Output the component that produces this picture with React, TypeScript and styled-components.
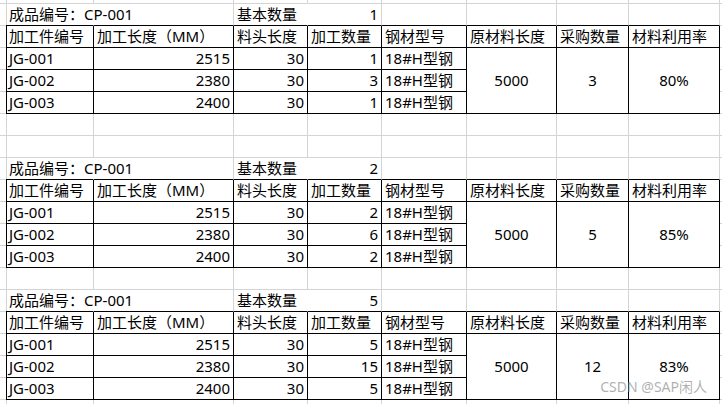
import React from 'react';
import styled, { createGlobalStyle, css } from 'styled-components';

const GlobalStyle = createGlobalStyle`
  html, body { margin: 0; padding: 0; background: #ffffff; }
  body { font-family: "Noto Sans", "Noto Sans CJK SC", sans-serif; }
`;

type Edge = 'g' | 'k' | 'n';
type Align = 'left' | 'right' | 'center';

const edgeColor = (e: Edge) => (e === 'k' ? '#000000' : e === 'g' ? '#d4d4d4' : 'transparent');

const Page = styled.div`
  position: relative;
  width: 722px;
  height: 404px;
  overflow: hidden;
  background: #ffffff;
`;

const Sheet = styled.div`
  display: grid;
  grid-template-columns: 6px 88px 140px 74px 74px 85px 90px 72px 91px 1fr;
  grid-template-rows: 4px;
  grid-auto-rows: 22px;
  width: 722px;
`;

const Cell = styled.div<{ $r: Edge; $b: Edge; $align?: Align; $span?: number }>`
  box-sizing: border-box;
  border-right: 1px solid ${(p) => edgeColor(p.$r)};
  border-bottom: 1px solid ${(p) => edgeColor(p.$b)};
  display: flex;
  align-items: center;
  justify-content: ${(p) =>
    p.$align === 'right' ? 'flex-end' : p.$align === 'center' ? 'center' : 'flex-start'};
  padding: 0 3px;
  white-space: nowrap;
  font-family: "Noto Sans", "Noto Sans CJK SC", sans-serif;
  font-size: 15px;
  line-height: 1;
  color: #000000;
  min-width: 0;
  ${(p) =>
    p.$span &&
    css`
      grid-row: span ${p.$span};
    `}
`;

const Watermark = styled.div`
  position: absolute;
  right: 15px;
  bottom: 10px;
  font-family: "Noto Sans", "Noto Sans CJK SC", sans-serif;
  font-size: 14px;
  line-height: 1;
  color: rgba(150, 150, 150, 0.75);
  pointer-events: none;
`;

type Block = { qty: number; counts: number[]; buy: number; rate: string };

const blocks: Block[] = [
  { qty: 1, counts: [1, 3, 1], buy: 3, rate: '80%' },
  { qty: 2, counts: [2, 6, 2], buy: 5, rate: '85%' },
  { qty: 5, counts: [5, 15, 5], buy: 12, rate: '83%' },
];

const parts = [
  { id: 'JG-001', len: 2515 },
  { id: 'JG-002', len: 2380 },
  { id: 'JG-003', len: 2400 },
];

const headers = ['加工件编号', '加工长度（MM）', '料头长度', '加工数量', '钢材型号', '原材料长度', '采购数量', '材料利用率'];

let keyN = 0;
const k = () => `c${keyN++}`;

const emptyRow = () =>
  Array.from({ length: 10 }, () => <Cell key={k()} $r="g" $b="g" />);

const titleRow = (qty: number) => [
  <Cell key={k()} $r="g" $b="g" />,
  <Cell key={k()} $r="n" $b="k">成品编号：CP-001</Cell>,
  <Cell key={k()} $r="g" $b="k" />,
  <Cell key={k()} $r="n" $b="k">基本数量</Cell>,
  <Cell key={k()} $r="g" $b="k" $align="right">{qty}</Cell>,
  <Cell key={k()} $r="g" $b="k" />,
  <Cell key={k()} $r="g" $b="k" />,
  <Cell key={k()} $r="g" $b="k" />,
  <Cell key={k()} $r="g" $b="k" />,
  <Cell key={k()} $r="g" $b="g" />,
];

const headerRow = () => [
  <Cell key={k()} $r="k" $b="g" />,
  ...headers.map((h) => (
    <Cell key={k()} $r="k" $b="k">
      {h}
    </Cell>
  )),
  <Cell key={k()} $r="g" $b="g" />,
];

const dataRows = (b: Block) =>
  parts.flatMap((p, i) => [
    <Cell key={k()} $r="k" $b="g" />,
    <Cell key={k()} $r="k" $b="k">{p.id}</Cell>,
    <Cell key={k()} $r="k" $b="k" $align="right">{p.len}</Cell>,
    <Cell key={k()} $r="k" $b="k" $align="right">30</Cell>,
    <Cell key={k()} $r="k" $b="k" $align="right">{b.counts[i]}</Cell>,
    <Cell key={k()} $r="k" $b="k">18#H型钢</Cell>,
    ...(i === 0
      ? [
          <Cell key={k()} $r="k" $b="k" $align="center" $span={3}>5000</Cell>,
          <Cell key={k()} $r="k" $b="k" $align="center" $span={3}>{b.buy}</Cell>,
          <Cell key={k()} $r="k" $b="k" $align="center" $span={3}>{b.rate}</Cell>,
        ]
      : []),
    <Cell key={k()} $r="g" $b="g" />,
  ]);

const blockRows = (b: Block) => [...titleRow(b.qty), ...headerRow(), ...dataRows(b)];

export default function App() {
  keyN = 0;
  const cells = [
    ...emptyRow(),
    ...blockRows(blocks[0]),
    ...emptyRow(),
    ...emptyRow(),
    ...blockRows(blocks[1]),
    ...emptyRow(),
    ...blockRows(blocks[2]),
    ...emptyRow(),
  ];
  return (
    <>
      <GlobalStyle />
      <Page>
        <Sheet>{cells}</Sheet>
        <Watermark>CSDN @SAP闲人</Watermark>
      </Page>
    </>
  );
}
